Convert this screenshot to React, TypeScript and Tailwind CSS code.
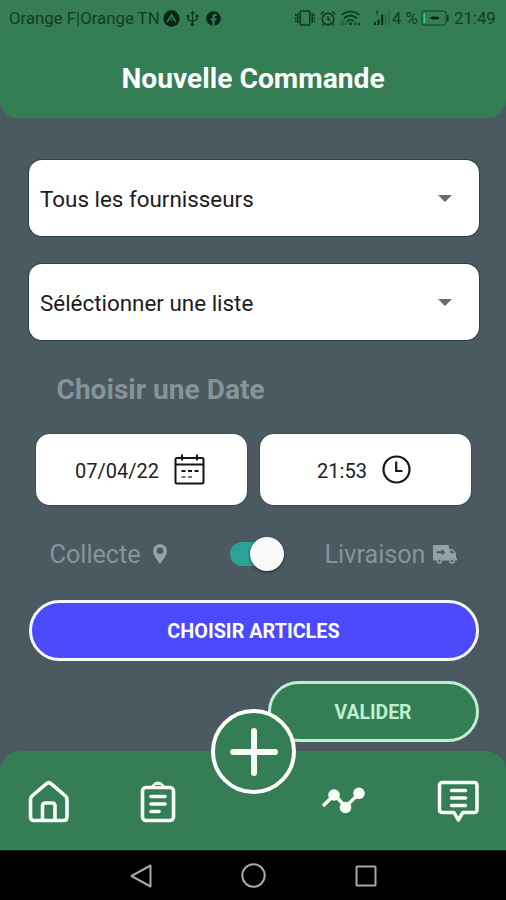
import { useState, type ReactNode } from "react";
import { FaFacebook } from "react-icons/fa";

function StatusBar() {
  return (
    <div className="flex h-9 items-center pl-[9px] pr-[10px] text-[16.8px] leading-none text-[#123d26]">
      <span className="w-[154px] whitespace-nowrap">Orange F|Orange TN</span>
      <svg className="h-[17px] w-[17px]" viewBox="0 0 17 17">
        <circle cx="8.5" cy="8.5" r="8.2" fill="#062616" />
        <path d="M4.2 11.8 8.5 4.8l4.3 7M8.5 8.6v2.2" fill="none" stroke="#347d55" strokeWidth="1.6" />
      </svg>
      <svg className="ml-[6px] h-[17px] w-[13px]" viewBox="0 0 13 17" fill="none" stroke="#0b3320" strokeWidth="1.2">
        <path d="M6.5 3v11M2 6.5v3l4.5 2.2L11 9V6" />
        <path d="M6.5.5 8.5 4h-4z" fill="#0b3320" stroke="none" />
        <circle cx="6.5" cy="14.5" r="1.7" fill="#0b3320" stroke="none" />
        <circle cx="2" cy="6.2" r="1.4" fill="#0b3320" stroke="none" />
        <path d="M9.7 4.7h2.6v2.6H9.7z" fill="#0b3320" stroke="none" />
      </svg>
      <FaFacebook className="ml-[7px] h-[15px] w-[15px] text-[#062616]" />

      <div className="ml-auto flex items-center">
        {/* vibrate */}
        <svg className="h-[16px] w-[20px]" viewBox="0 0 20 16" fill="none" stroke="#0f3824" strokeWidth="1.5">
          <rect x="5.2" y="1" width="9.6" height="14" rx="1" />
          <path d="M2.8 3v10M17.2 3v10" />
          <path d="M.8 4v8M19.2 4v8" strokeDasharray="2 1.2" />
        </svg>
        {/* alarm */}
        <svg className="ml-[5px] h-[16px] w-[16px]" viewBox="0 0 16 16" fill="none" stroke="#0f3824" strokeWidth="1.5">
          <circle cx="8" cy="9" r="5.8" />
          <path d="M8 5.8V9.4l2.6 1.2M.8 4.2 4 1.2M15.2 4.2 12 1.2M3.6 13.6 2.2 15.4M12.4 13.6l1.4 1.8" />
        </svg>
        {/* wifi */}
        <svg className="ml-[4px] h-[16px] w-[21px]" viewBox="0 0 21 16" fill="none" stroke="#0f3824" strokeWidth="1.6">
          <path d="M1.5 5.2C6.5.2 14.5.2 19.5 5.2M4 8.5c3.5-3.8 9.5-3.8 13 0M7 11.5c2-2.4 5-2.4 7 0" />
          <path d="M1 15v-4M3.5 15v-5M6 15v-2.5" strokeOpacity=".45" />
          <circle cx="10.5" cy="13.8" r="1.4" fill="#0f3824" stroke="none" />
          <path d="M14.5 14h2M18 14h2" strokeWidth="2.4" />
        </svg>
        {/* signal */}
        <svg className="ml-[12px] h-[16px] w-[17px]" viewBox="0 0 17 16">
          <path d="M1 15v-3h2v3zM4.5 15V9.5h2V15zM8.2 15V4.5h2V15z" fill="#082c19" />
          <path d="M11.8 15V3.5h1.8V15zM15 15V1h1.5v14z" fill="#123d26" fillOpacity=".28" />
          <path d="M4 .8v4M2.6 2.2 4 .8l1.4 1.4" fill="none" stroke="#123d26" />
        </svg>
        <span className="ml-[2px] w-[29px] whitespace-nowrap">4 %</span>
        {/* battery */}
        <svg className="h-[16px] w-[28px]" viewBox="0 0 28 16">
          <rect x=".9" y="1" width="24" height="14" rx="2.5" fill="none" stroke="#1a5634" strokeWidth="1.3" />
          <path d="M2.5 3h1.6v10H2.5z" fill="#22d878" />
          <path d="M7.5 8 12 6.8V5.2l1.5 1.6H18v2.4h-4.5L12 10.8V9.2z" fill="#062616" />
          <path d="M26 5h1.5v6H26z" fill="#0b3320" />
        </svg>
        <span className="ml-[5px] w-[42px] whitespace-nowrap">21:49</span>
      </div>
    </div>
  );
}

function Select({ label }: { label: string }) {
  return (
    <button className="flex h-[76px] w-full items-center justify-between rounded-[13px] bg-white pl-[11.5px] pr-[27px] text-[22.4px] text-[#1c1c1c] shadow-[0_0_0_1px_#2b414f]">
      <span className="whitespace-nowrap pt-[3px]">{label}</span>
      <svg className="h-[7px] w-[14px]" viewBox="0 0 14 7">
        <path d="M0 0h14L7 7z" fill="#6b6b6b" />
      </svg>
    </button>
  );
}

function PickerBox({ value, children }: { value: string; children: ReactNode }) {
  return (
    <button className="flex h-[71px] w-[211px] items-center justify-center gap-[15px] rounded-[14px] bg-white pr-0.5 text-[20px] text-[#222] shadow-[0_0_0_1px_#3c4b54]">
      <span className="whitespace-nowrap pt-[2px]">{value}</span>
      {children}
    </button>
  );
}

function CalendarIcon() {
  return (
    <svg className="h-[31px] w-[31px]" viewBox="0 0 31 31" fill="none" stroke="#151515" strokeWidth="2">
      <rect x="1.5" y="4" width="28" height="25.5" rx="1.5" />
      <path d="M1.5 10.5h28M8 .5v6M23 .5v6" />
      <path d="M7.5 17h4M14 17h4M20.5 17h4" />
      <path d="M7.5 23h4M14 23h4" stroke="#777" />
    </svg>
  );
}

function ClockIcon() {
  return (
    <svg className="h-[29px] w-[29px]" viewBox="0 0 29 29" fill="none" stroke="#151515" strokeWidth="2.2">
      <circle cx="14.5" cy="14.5" r="13" />
      <path d="M14.2 6.5V16h6.3" />
    </svg>
  );
}

function Toggle() {
  const [on, setOn] = useState(true);
  return (
    <button
      role="switch"
      aria-checked={on}
      onClick={() => setOn(!on)}
      className={`flex h-6 w-[54px] items-center rounded-full bg-[#2ba394] ${on ? "justify-end" : "justify-start"}`}
    >
      <span className="h-[34px] w-[34px] shrink-0 rounded-full bg-[#fafafa] shadow-[0_1px_3px_rgba(0,0,0,0.6)]" />
    </button>
  );
}

function TabBar() {
  return (
    <nav className="relative flex h-[99px] items-start rounded-t-[20px] bg-[#347d55] pl-7 pt-[29px] text-[#f8fff8]">
      {/* home */}
      <svg className="h-[43px] w-[42px]" viewBox="0 0 42 43" fill="none" stroke="currentColor" strokeWidth="3.6" strokeLinejoin="round">
        <path d="M2.5 19.5c0-1.5.5-2.5 1.5-3.5L18.5 3.6c1.5-1.4 3-1.4 4.5 0L37.5 16c1 1 1.5 2 1.5 3.500V37c0 2.300-1.200 3.500-3.500 3.500H6c-2.300 0-3.500-1.200-3.500-3.500z" />
        <path d="M14.5 40V26c0-2 1-3 3-3H24c2 0 3 1 3 3v14" />
      </svg>
      {/* orders */}
      <svg className="ml-[70px] h-[43px] w-[36px]" viewBox="0 0 36 43" fill="none" stroke="currentColor" strokeWidth="3.6" strokeLinejoin="round" strokeLinecap="round">
        <rect x="2.5" y="7.5" width="31" height="33" rx="3.5" />
        <path d="M11 7c2 0 2.5-4.5 7-4.5s5 4.5 7 4.5z" fill="currentColor" strokeWidth="2" />
        <path d="M15.5 5.5h5" stroke="#347d55" strokeWidth="1.2" />
        <path d="M11 16.5h14M11 24h14M11 31.5h8" />
      </svg>
      {/* stats */}
      <svg className="ml-[145px] mt-[7px] h-[27px] w-[45px]" viewBox="0 0 45 27" fill="currentColor">
        <path d="M2 19 13.5 7.5 24.500 20 38 6.500" fill="none" stroke="currentColor" strokeWidth="3.5" />
        <circle cx="13" cy="8" r="5.8" />
        <circle cx="24.5" cy="20.5" r="5.8" />
        <circle cx="38" cy="6.3" r="5.8" />
      </svg>
      {/* messages */}
      <svg className="ml-[71px] h-[43px] w-[43px]" viewBox="0 0 43 43" fill="none" stroke="currentColor" strokeWidth="3.5" strokeLinejoin="round">
        <path d="M5.5 2.5H37c2 0 3 1 3 3v24c0 2-1 3-3 3H25.8L21.3 40 17 32.5H5.5c-2 0-3-1-3-3v-24c0-2 1-3 3-3z" />
        <path d="M14.5 10.5h14M14.5 18h14M14.5 25.5h14" strokeLinecap="round" />
      </svg>

      <button className="absolute -top-[42px] left-[211px] flex h-[85px] w-[85px] items-center justify-center rounded-full border-4 border-[#fbfffb] bg-[#347d55]">
        <svg className="h-12 w-12" viewBox="0 0 48 48" stroke="currentColor" strokeWidth="6" strokeLinecap="round">
          <path d="M24 3v42M3 24h42" />
        </svg>
      </button>
    </nav>
  );
}

function SystemNav() {
  return (
    <div className="flex h-[50px] items-center border-t border-[#0c2a1b] bg-black pl-[130px]">
      <svg className="h-6 w-[22px]" viewBox="0 0 22 24" fill="none" stroke="#a8a8a8" strokeWidth="2" strokeLinejoin="round">
        <path d="M20.5 1.5v21L1.5 12z" />
      </svg>
      <svg className="ml-[89px] h-[25px] w-[25px]" viewBox="0 0 25 25" fill="none" stroke="#a8a8a8" strokeWidth="2">
        <circle cx="12.5" cy="12.5" r="11.2" />
      </svg>
      <svg className="ml-[89px] h-[22px] w-[22px]" viewBox="0 0 22 22" fill="none" stroke="#a8a8a8" strokeWidth="2">
        <rect x="1.5" y="1.5" width="19" height="19" rx=".5" />
      </svg>
    </div>
  );
}

export default function App() {
  return (
    <div className="flex h-[900px] w-[506px] flex-col overflow-hidden bg-[#4b5961] font-['Roboto',sans-serif]">
      <header className="h-[118px] shrink-0 rounded-b-[18px] bg-[#347d55]">
        <StatusBar />
        <h1 className="mt-[23px] text-center text-[28.2px] font-bold leading-10 text-white">Nouvelle Commande</h1>
      </header>

      <main className="flex flex-1 flex-col pl-[28.5px] pr-[27.5px] pt-[42px]">
        <Select label="Tous les fournisseurs" />
        <div className="h-7" />
        <Select label="Séléctionner une liste" />

        <h2 className="ml-7 mt-[30px] text-[28.1px] font-bold leading-10 text-[#86949a]">Choisir une Date</h2>

        <div className="mt-6 flex justify-between pl-[7px] pr-2">
          <PickerBox value="07/04/22">
            <CalendarIcon />
          </PickerBox>
          <PickerBox value="21:53">
            <ClockIcon />
          </PickerBox>
        </div>

        <div className="mt-[29px] flex h-10 items-center pl-[21px] text-[25.2px] text-[#86949a]">
          <span className="w-[103px] pt-0.5">Collecte</span>
          <svg className="h-5 w-[14px]" viewBox="0 0 14 20">
            <path fillRule="evenodd" d="M7 0a7 7 0 0 1 7 7c0 3.500-3.500 9-7 13C3.500 16 0 10.500 0 7a7 7 0 0 1 7-7zm0 3.500a3.300 3.300 0 1 0 0 6.600 3.300 3.300 0 0 0 0-6.600z" fill="#94a2a8" />
          </svg>
          <div className="ml-[63px]">
            <Toggle />
          </div>
          <span className="ml-[41px] w-[108px] pt-0.5">Livraison</span>
          <svg className="h-[19px] w-[24px]" viewBox="0 0 24 19" fill="#94a2a8">
            <path d="M1.5 0h13c1 0 1.500.5 1.500 1.500V4h3.500L23 8v5h1v2.500h-2a3 3 0 0 0-5.800 0H9.500a3 3 0 0 0-5.800 0H1.500C.5 15.500 0 15 0 14V1.500C0 .5.500 0 1.500 0z" />
            <path d="M17.5 5.5h1.800l2 2.700h-3.800z" fill="#4b5961" />
            <path d="M3.5 6.200h5V4l4 3.200-4 3.200V8.200h-5z" fill="#4b5961" />
            <circle cx="6.5" cy="16" r="2" fill="none" stroke="#94a2a8" strokeWidth="1.6" />
            <circle cx="19" cy="16" r="2" fill="none" stroke="#94a2a8" strokeWidth="1.6" />
          </svg>
        </div>

        <button className="mt-[25.5px] h-[61px] w-full rounded-full border-[3px] border-[#f6f6ff] bg-[#4a4afa] pt-[3px] text-[19.8px] font-bold text-white">
          CHOISIR ARTICLES
        </button>
        <button className="mt-5 h-[61px] w-[211px] self-end rounded-full border-[3px] border-[#bdf0d0] bg-[#347d55] pt-[4px] text-[19.4px] font-bold text-[#bdf0d0]">
          VALIDER
        </button>
      </main>

      <TabBar />
      <SystemNav />
    </div>
  );
}
